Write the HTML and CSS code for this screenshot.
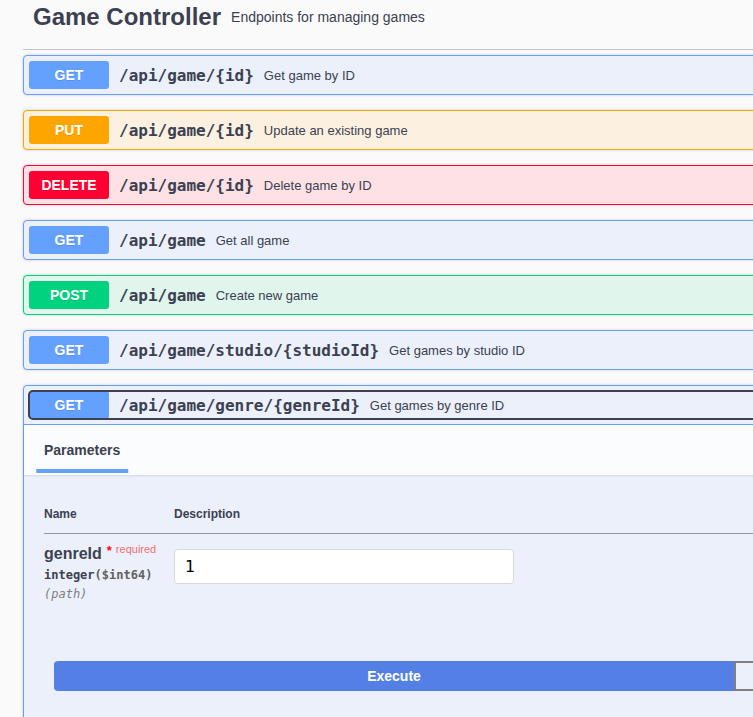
FILE: index.html
```html
<!DOCTYPE html>
<html lang="en">
<head>
<meta charset="utf-8">
<title>Game Controller</title>
<link rel="stylesheet" href="styles.css">
</head>
<body>
<div class="page">
  <h3 class="tag-title"><span class="tag-name">Game Controller</span><small class="tag-desc">Endpoints for managing games</small></h3>
  <div class="ops">
    <div class="opblock get">
      <div class="summary"><div class="control"><span class="method">GET</span><span class="path">/api/game/{id}</span><span class="desc">Get game by ID</span></div></div>
    </div>
    <div class="opblock put">
      <div class="summary"><div class="control"><span class="method">PUT</span><span class="path">/api/game/{id}</span><span class="desc">Update an existing game</span></div></div>
    </div>
    <div class="opblock delete">
      <div class="summary"><div class="control"><span class="method">DELETE</span><span class="path">/api/game/{id}</span><span class="desc">Delete game by ID</span></div></div>
    </div>
    <div class="opblock get">
      <div class="summary"><div class="control"><span class="method">GET</span><span class="path">/api/game</span><span class="desc">Get all game</span></div></div>
    </div>
    <div class="opblock post">
      <div class="summary"><div class="control"><span class="method">POST</span><span class="path">/api/game</span><span class="desc">Create new game</span></div></div>
    </div>
    <div class="opblock get">
      <div class="summary"><div class="control"><span class="method">GET</span><span class="path">/api/game/studio/{studioId}</span><span class="desc">Get games by studio ID</span></div></div>
    </div>
    <div class="opblock get open">
      <div class="summary"><div class="control focused"><span class="method">GET</span><span class="path">/api/game/genre/{genreId}</span><span class="desc">Get games by genre ID</span></div></div>
      <div class="op-body">
        <div class="section-header">
          <div class="tab"><h4><span class="tab-label">Parameters</span></h4></div>
        </div>
        <div class="table-container">
          <table class="params">
            <thead>
              <tr><th class="col-name">Name</th><th class="col-desc">Description</th></tr>
            </thead>
            <tbody>
              <tr>
                <td class="col-name">
                  <div class="pname">genreId<span class="star">*</span><span class="req">required</span></div>
                  <div class="ptype">integer<span class="fmt">($int64)</span></div>
                  <div class="pin">(path)</div>
                </td>
                <td class="col-desc"><input class="pinput" type="text" value="1"></td>
              </tr>
            </tbody>
          </table>
        </div>
        <div class="btn-group">
          <button class="btn execute">Execute</button>
          <button class="btn clear"></button>
        </div>
        <div class="spacer"></div>
      </div>
    </div>
  </div>
</div>
</body>
</html>
```

FILE: styles.css
```css
html, body {
  margin: 0;
  padding: 0;
  overflow: hidden;
  background: #fafafa;
}

body {
  font-family: "Liberation Sans", Arial, sans-serif;
  color: #3b4151;
}

.page {
  width: 1422px;
  padding-left: 23px;
}

.tag-title {
  display: flex;
  align-items: center;
  margin: 0 0 5px 0;
  padding: 3px 20px 18px 10px;
  border-bottom: 1px solid rgba(59, 65, 81, 0.3);
  font-size: 24px;
  font-weight: 700;
  color: #3b4151;
}

.tag-desc {
  font-size: 14px;
  font-weight: 400;
  padding: 0 10px;
}

.opblock {
  margin: 0 0 15px 0;
  border: 1px solid #000;
  border-radius: 4px;
  box-shadow: 0 0 3px rgba(0, 0, 0, 0.19);
}

.summary {
  padding: 5px;
}

.control {
  display: flex;
  align-items: center;
  border-radius: 4px;
}

.control.focused {
  outline: 2px solid #3b4151;
  outline-offset: -1px;
}

.method {
  min-width: 80px;
  padding: 6px 0;
  font-size: 14px;
  font-weight: 700;
  text-align: center;
  color: #fff;
  border-radius: 3px;
  text-shadow: 0 1px 0 rgba(0, 0, 0, 0.1);
}

.path {
  padding: 0 10px;
  font-family: "DejaVu Sans Mono", monospace;
  font-size: 16px;
  font-weight: 700;
  color: #3b4151;
}

.desc {
  font-size: 13px;
  color: #3b4151;
}

.get { background: #ebf0fa; border-color: #64a0fe; }
.get .method { background: #64a0fe; }
.put { background: #fcf1e1; border-color: #ffa500; }
.put .method { background: #ffa500; }
.delete { background: #fde1e5; border-color: #ff0033; }
.delete .method { background: #ff0033; }
.post { background: #e0f5ec; border-color: #00d27f; }
.post .method { background: #00d27f; }

.open .summary {
  border-bottom: 1px solid #64a0fe;
}

.section-header {
  display: flex;
  align-items: center;
  box-sizing: border-box;
  height: 50px;
  padding: 0 20px;
  background: rgba(255, 255, 255, 0.8);
  box-shadow: 0 1px 2px rgba(0, 0, 0, 0.1);
}

.tab h4 {
  margin: 0;
  font-size: 14px;
  font-weight: 700;
  color: #3b4151;
}

.tab-label {
  position: relative;
}

.tab-label::after {
  content: "";
  position: absolute;
  left: 50%;
  bottom: -15px;
  width: 120%;
  height: 4px;
  transform: translateX(-50%);
  background: #64a0fe;
}

.table-container {
  padding: 20px;
}

.params {
  width: 100%;
  border-collapse: collapse;
}

.params th {
  padding: 12px 0;
  font-size: 12px;
  font-weight: 700;
  text-align: left;
  color: #3b4151;
  border-bottom: 1px solid rgba(59, 65, 81, 0.3);
}

.params td {
  padding: 10px 0;
  vertical-align: top;
}

.col-name {
  width: 130px;
}

.pname {
  font-size: 16px;
  font-weight: 700;
  color: #3b4151;
}

.star {
  padding: 0 4px 0 5px;
  font-size: 13px;
  font-weight: 700;
  color: red;
  vertical-align: 4px;
  line-height: 1;
}

.req {
  font-size: 11px;
  font-weight: 400;
  color: rgba(255, 0, 0, 0.6);
  vertical-align: 6px;
  line-height: 1;
}

.ptype {
  padding: 5px 0;
  font-family: "DejaVu Sans Mono", monospace;
  font-size: 12px;
  font-weight: 700;
  color: #3b4151;
}

.fmt {
  color: #606060;
}

.pin {
  font-family: "DejaVu Sans Mono", monospace;
  font-size: 12px;
  font-style: italic;
  color: #808080;
}

.pinput {
  display: block;
  box-sizing: border-box;
  width: 340px;
  height: 35px;
  margin: 5px 0;
  padding: 0 10px;
  border: 1px solid #d9d9d9;
  border-radius: 4px;
  background: #fff;
  font-family: "DejaVu Sans", sans-serif;
  font-size: 16px;
  color: #000;
}

.btn-group {
  display: flex;
  padding: 30px;
}

.btn {
  flex: 1;
  height: 30px;
  padding: 5px 23px;
  border: 2px solid #808080;
  font-family: "Liberation Sans", Arial, sans-serif;
  font-size: 14px;
  font-weight: 700;
  background: transparent;
  color: #3b4151;
}

.btn.execute {
  background: #547fe5;
  border-color: #547fe5;
  color: #fff;
  border-radius: 4px 0 0 4px;
}

.btn.clear {
  border-radius: 0 4px 4px 0;
}

.spacer {
  height: 40px;
}
```
